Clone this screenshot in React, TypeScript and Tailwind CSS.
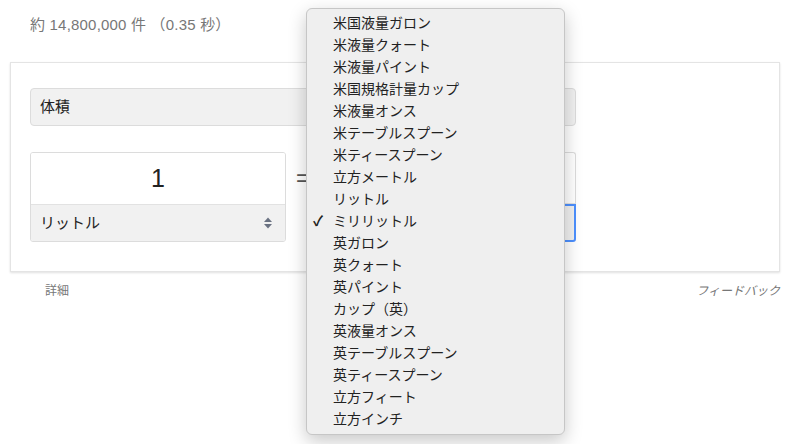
const units = [
  '米国液量ガロン',
  '米液量クォート',
  '米液量パイント',
  '米国規格計量カップ',
  '米液量オンス',
  '米テーブルスプーン',
  '米ティースプーン',
  '立方メートル',
  'リットル',
  'ミリリットル',
  '英ガロン',
  '英クォート',
  '英パイント',
  'カップ（英）',
  '英液量オンス',
  '英テーブルスプーン',
  '英ティースプーン',
  '立方フィート',
  '立方インチ',
]

const selected = 'ミリリットル'

function UpDown() {
  return (
    <svg width="10" height="16" viewBox="0 0 10 16" className="text-gray-500">
      <path d="M1 7 L5 2.5 L9 7 Z" fill="currentColor" />
      <path d="M1 9 L5 13.5 L9 9 Z" fill="currentColor" />
    </svg>
  )
}

export default function App() {
  return (
    <div
      className="relative w-[800px] h-[444px] bg-white overflow-hidden"
      style={{ fontFamily: "'Liberation Sans', 'Noto Sans CJK JP', sans-serif" }}
    >
      {/* result count */}
      <div className="pl-[30px] pt-[14px] h-[62px] text-[15px] text-[#777] tracking-[0.2px]">
        約 14,800,000 件 （0.35 秒）
      </div>

      {/* converter card */}
      <div className="mx-[10px] w-[770px] h-[210px] border border-[#e4e4e4] shadow-[0_1px_2px_rgba(0,0,0,0.12)] px-[19px] pt-[25px]">
        <div className="w-[546px] h-[38px] rounded-[4px] border border-[#dcdcdc] bg-[#f1f1f1] flex items-center px-[9px] text-[15px] text-[#222]">
          体積
        </div>

        <div className="mt-[26px] flex items-start">
          {/* left value */}
          <div className="w-[256px] h-[90px] rounded-[3px] border border-[#dcdcdc] flex flex-col overflow-hidden">
            <div className="h-[52px] bg-white flex items-center justify-center text-[25px] text-[#222] border-b border-[#e2e2e2]">
              1
            </div>
            <div className="flex-1 bg-[#f1f1f1] flex items-center justify-between pl-[9px] pr-[12px] text-[15px] text-[#222]">
              <span>リットル</span>
              <UpDown />
            </div>
          </div>

          <div className="w-[34px] h-[52px] flex items-center justify-center text-[24px] text-[#555]">=</div>

          {/* right value */}
          <div className="w-[256px] h-[90px] flex flex-col">
            <div className="h-[52px] rounded-t-[3px] border border-[#dcdcdc] border-b-[#e2e2e2] bg-white" />
            <div className="flex-1 rounded-b-[3px] border-2 border-[#4d90fe] bg-[#f1f1f1]" />
          </div>
        </div>
      </div>

      {/* footer links */}
      <div className="flex justify-between pl-[45px] pr-[20px] pt-[10px] text-[12px] text-[#777]">
        <span>詳細</span>
        <span className="italic">フィードバック</span>
      </div>

      {/* open dropdown menu */}
      <div className="absolute left-[306px] top-[8px] w-[259px] h-[427px] rounded-[6px] border border-[#c6c6c6] bg-[#efefef] shadow-[0_6px_18px_rgba(0,0,0,0.22)] pt-[3px]">
        {units.map((u) => (
          <div key={u} className="relative h-[22px] flex items-center pl-[26px] text-[14px] text-[#222]">
            {u === selected && (
              <span className="absolute left-[6px] text-[14px] font-bold">✓</span>
            )}
            {u}
          </div>
        ))}
      </div>
    </div>
  )
}
